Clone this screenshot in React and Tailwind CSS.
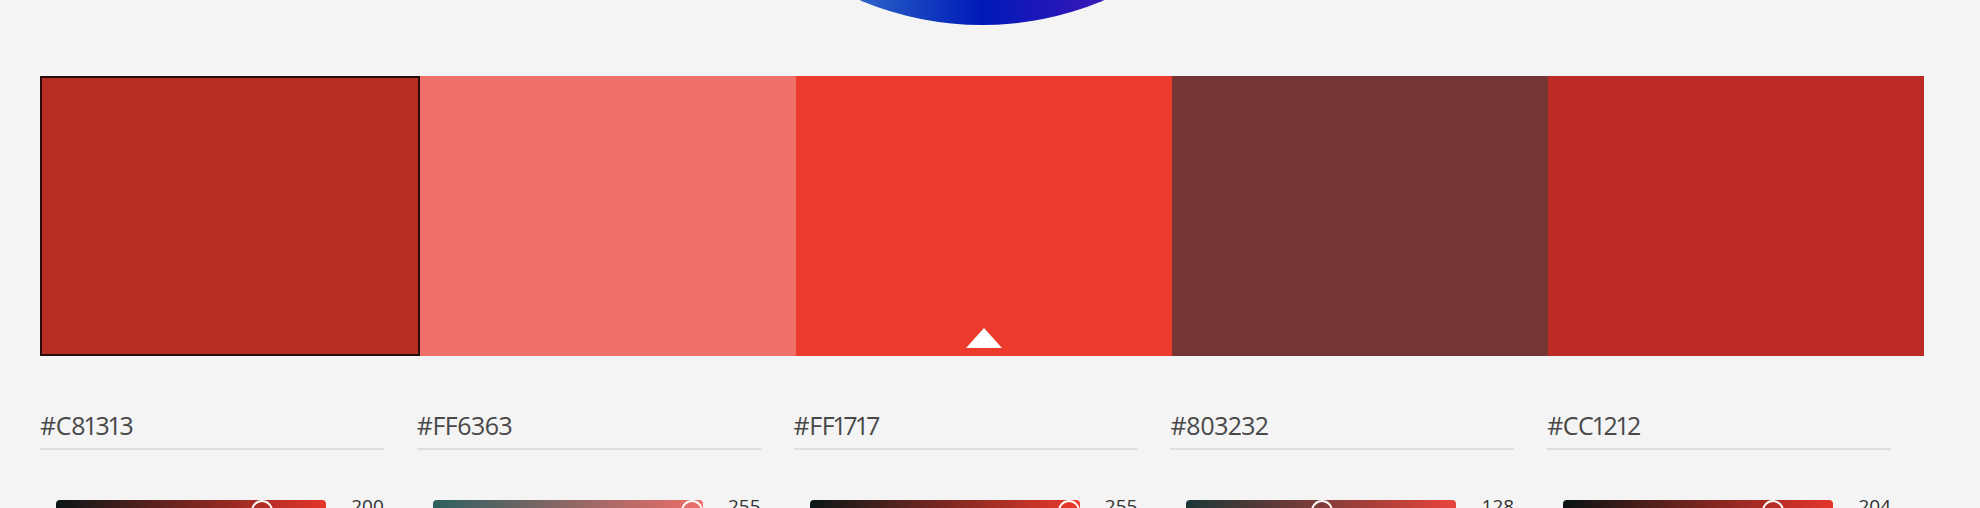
import React from 'react';

const swatches = [
  { hex: '#C81313', fill: 'bg-[#b82d22]', value: 200, from: '#0a1616', to: '#e5352a', selected: true },
  { hex: '#FF6363', fill: 'bg-[#ef6f6a]', value: 255, from: '#2b6060', to: '#ef6e69' },
  { hex: '#FF1717', fill: 'bg-[#ec3a2c]', value: 255, from: '#0a1717', to: '#ec392b', active: true },
  { hex: '#803232', fill: 'bg-[#773636]', value: 128, from: '#1b3636', to: '#e9443c' },
  { hex: '#CC1212', fill: 'bg-[#bc2b23]', value: 204, from: '#081414', to: '#e5352a' },
];

const App = () => {
  return (
    <div className="h-[508px] bg-[#f4f4f4] font-['Open_Sans',sans-serif] overflow-hidden">
      {/* Color wheel (bottom edge) */}
      <div className="h-[76px] pl-[40px] pr-[56px] flex justify-center overflow-hidden">
        <div className="w-[626px] h-[626px] shrink-0 mt-[-601px] rounded-full bg-[linear-gradient(90deg,#5a8fd8_0%,#2e64c8_30%,#1440c0_40%,#0019b8_50%,#1e17b8_60%,#3c19b8_70%,#5a1cb0_100%)]"></div>
      </div>

      {/* Swatch strip */}
      <div className="flex h-[280px] ml-[40px] mr-[56px]">
        {swatches.map((s, i) => (
          <div
            key={i}
            className={`flex-1 relative ${s.fill} ${s.selected ? 'border-2 border-[#2a0b0b]' : ''}`}
          >
            {s.active && (
              <div className="absolute bottom-[8px] left-1/2 -translate-x-1/2 w-0 h-0 border-l-[18px] border-r-[18px] border-b-[20px] border-l-transparent border-r-transparent border-b-white"></div>
            )}
          </div>
        ))}
      </div>

      {/* Hex labels + sliders */}
      <div className="flex ml-[40px] mr-[56px] mt-[51px]">
        {swatches.map((s, i) => (
          <div key={i} className="flex-1 pr-[33px]">
            <div className="text-[25px] leading-[36px] tracking-[-0.5px] proportional-nums text-[#484848] pb-[5px] border-b-2 border-[#dedede]">
              {s.hex}
            </div>
            <div className="flex items-start mt-[50px] pl-[16px]">
              <div
                className="relative w-[270px] h-[22px] rounded-[4px] shrink-0"
                style={{ background: `linear-gradient(90deg, ${s.from}, ${s.to})` }}
              >
                <div
                  className="absolute top-0 w-[22px] h-[22px] rounded-full border-2 border-white"
                  style={{ left: `${(248 * s.value) / 255}px` }}
                ></div>
              </div>
              <div className="flex-1 text-right text-[19px] leading-[20px] mt-[-4px] text-[#333]">{s.value}</div>
            </div>
          </div>
        ))}
      </div>
    </div>
  );
};

export default App;
